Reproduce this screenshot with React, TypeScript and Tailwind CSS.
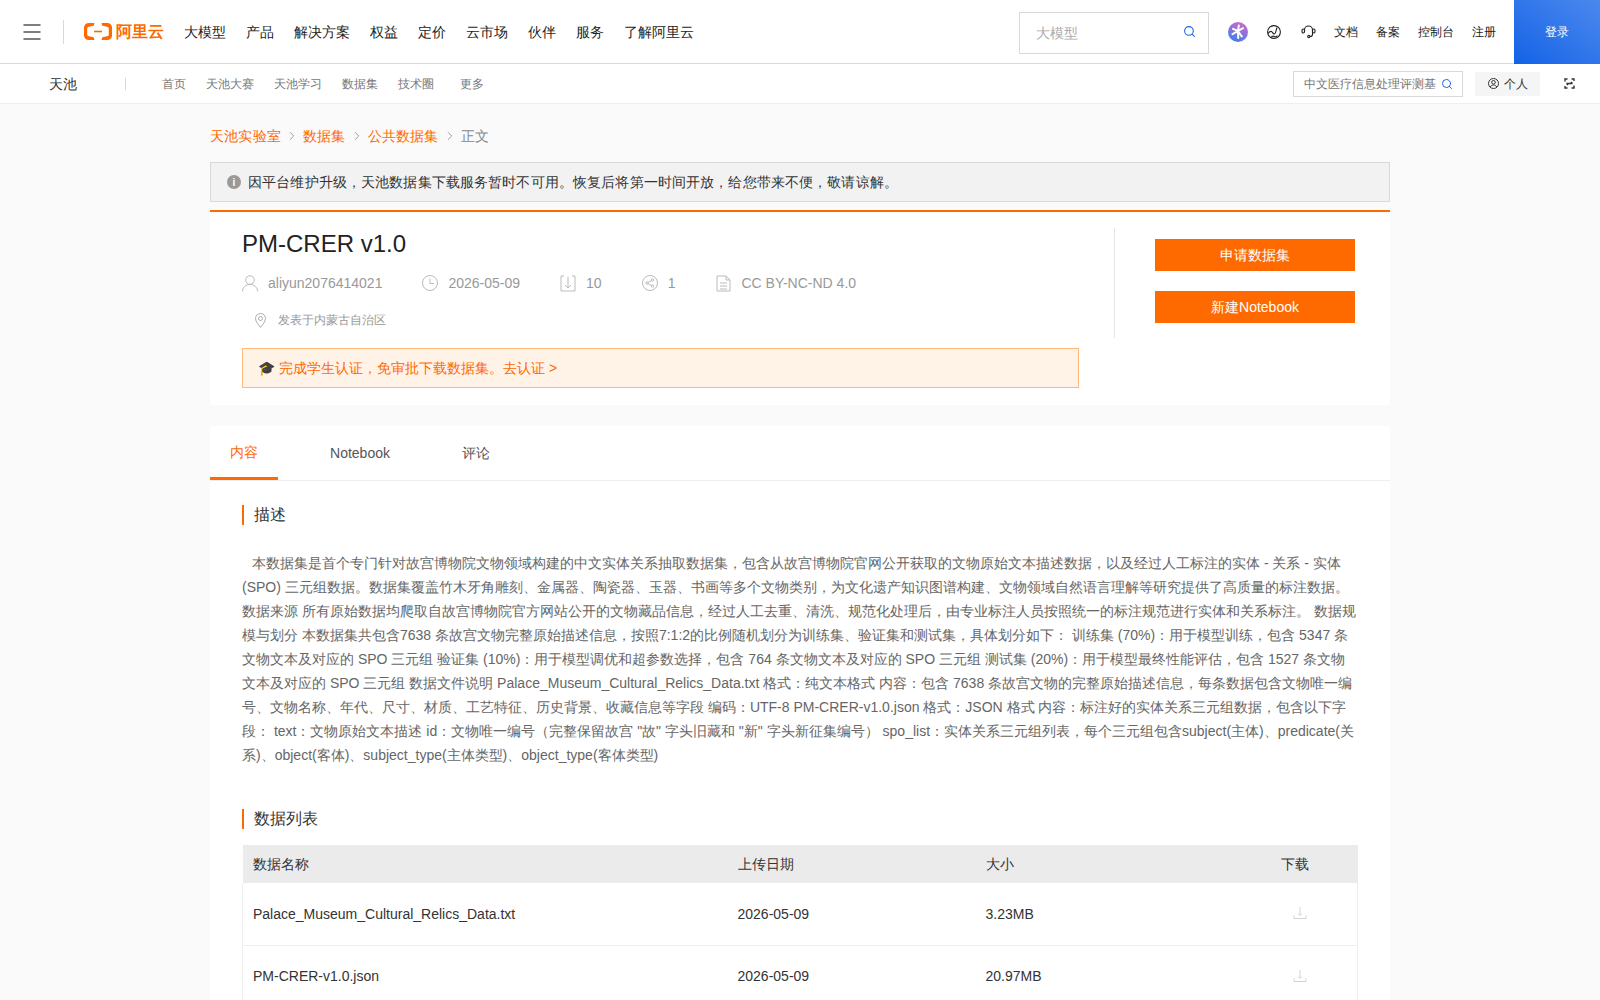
import React from 'react';
import { Search, ChevronRight, Menu } from 'lucide-react';

const mainNav = ['大模型', '产品', '解决方案', '权益', '定价', '云市场', '伙伴', '服务', '了解阿里云'];
const subNav = [
  { label: '首页', cls: 'ml-[36px]' },
  { label: '天池大赛', cls: 'ml-[20px]' },
  { label: '天池学习', cls: 'ml-[20px]' },
  { label: '数据集', cls: 'ml-[20px]' },
  { label: '技术圈', cls: 'ml-[20px]' },
  { label: '更多', cls: 'ml-[26px]' },
];

const description =
  '本数据集是首个专门针对故宫博物院文物领域构建的中文实体关系抽取数据集，包含从故宫博物院官网公开获取的文物原始文本描述数据，以及经过人工标注的实体 - 关系 - 实体 (SPO) 三元组数据。数据集覆盖竹木牙角雕刻、金属器、陶瓷器、玉器、书画等多个文物类别，为文化遗产知识图谱构建、文物领域自然语言理解等研究提供了高质量的标注数据。 数据来源 所有原始数据均爬取自故宫博物院官方网站公开的文物藏品信息，经过人工去重、清洗、规范化处理后，由专业标注人员按照统一的标注规范进行实体和关系标注。 数据规模与划分 本数据集共包含7638 条故宫文物完整原始描述信息，按照7:1:2的比例随机划分为训练集、验证集和测试集，具体划分如下： 训练集 (70%)：用于模型训练，包含 5347 条文物文本及对应的 SPO 三元组 验证集 (10%)：用于模型调优和超参数选择，包含 764 条文物文本及对应的 SPO 三元组 测试集 (20%)：用于模型最终性能评估，包含 1527 条文物文本及对应的 SPO 三元组 数据文件说明 Palace_Museum_Cultural_Relics_Data.txt 格式：纯文本格式 内容：包含 7638 条故宫文物的完整原始描述信息，每条数据包含文物唯一编号、文物名称、年代、尺寸、材质、工艺特征、历史背景、收藏信息等字段 编码：UTF-8 PM-CRER-v1.0.json 格式：JSON 格式 内容：标注好的实体关系三元组数据，包含以下字段： text：文物原始文本描述 id：文物唯一编号（完整保留故宫 "故" 字头旧藏和 "新" 字头新征集编号） spo_list：实体关系三元组列表，每个三元组包含subject(主体)、predicate(关系)、object(客体)、subject_type(主体类型)、object_type(客体类型)';

const files = [
  { name: 'Palace_Museum_Cultural_Relics_Data.txt', date: '2026-05-09', size: '3.23MB' },
  { name: 'PM-CRER-v1.0.json', date: '2026-05-09', size: '20.97MB' },
];

const DownloadIcon = () => (
  <svg width="14" height="14" viewBox="0 0 14 14" fill="none" stroke="#d4d4d4" strokeWidth="1">
    <path d="M7 1v8M5 7.5 7 9.5l2-2M1 9.500v3h12v-3" />
  </svg>
);

const Logo = () => (
  <div className="flex items-center gap-[4px] text-[#ff6a00]">
    <svg width="28" height="17" viewBox="0 0 28 17" fill="#ff6a00">
      <path d="M5 0h5.500l-.8 2.800-4.700 1C4 4 3.200 4.600 3.200 5.600v5.800c0 1 .8 1.600 1.800 1.800l4.700 1 .8 2.800H5c-3 0-5-2-5-4.500v-8C0 2 2 0 5 0Z" />
      <path d="M17.500 0H23c3 0 5 2 5 4.500v8c0 2.500-2 4.500-5 4.500h-5.500l.8-2.800 4.700-1c1-.2 1.800-.8 1.800-1.800V5.600c0-1-.8-1.600-1.800-1.800l-4.700-1L17.500 0Z" />
      <rect x="10" y="7.700" width="8" height="1.600" />
    </svg>
    <span className="text-[16px] font-bold leading-none">阿里云</span>
  </div>
);

const Chevron = () => <ChevronRight size={14} strokeWidth={1.2} className="mx-[4px] text-[#777]" />;

const SectionTitle = ({ children }: { children: React.ReactNode }) => (
  <div className="flex h-[20px] items-center border-l-2 border-[#ff6a00] pl-[10px] text-[16px] text-[#333]">{children}</div>
);

export default function App() {
  return (
    <div className="h-[1000px] overflow-hidden bg-[#fafafa] font-['Liberation_Sans',sans-serif] text-[14px] text-[#333]">
      {/* top bar */}
      <header className="flex h-[64px] items-center border-b border-[#d9d9d9] bg-white">
        <Menu size={24} strokeWidth={1.5} className="ml-[20px] text-[#555]" />
        <div className="ml-[19px] mr-[20px] h-[24px] w-px bg-[#d9d9d9]" />
        <Logo />
        <nav className="ml-[20px] mt-[2px] flex gap-[20px] text-[#222]">
          {mainNav.map((n) => (
            <span key={n}>{n}</span>
          ))}
        </nav>
        <div className="ml-auto mt-[2px] flex h-[42px] w-[190px] items-center justify-between border border-[#d9d9d9] pl-[16px] pr-[12px] text-[#aaa]">
          <span className="pt-[1px]">大模型</span>
          <Search size={13} className="mb-[2px] text-[#1a66e6]" />
        </div>
        <svg className="ml-[19px]" width="20" height="20" viewBox="0 0 20 20">
          <defs>
            <linearGradient id="star" x1="0.7" y1="0" x2="0.3" y2="1">
              <stop offset="0" stopColor="#d06ac8" />
              <stop offset="1" stopColor="#3a80f0" />
            </linearGradient>
          </defs>
          <circle cx="10" cy="10" r="10" fill="url(#star)" />
          <path d="M10.800 3.500 10 9 5 6.800M10 9l5-2.800M10 9l-5.500 3.200M10 9l.2 7M10 9l3.800 5.500" stroke="#fff" strokeWidth="2" strokeLinecap="round" fill="none" />
        </svg>
        <svg className="ml-[19px]" width="14" height="14" viewBox="0 0 14 14" fill="none" stroke="#222" strokeWidth="1.100">
          <circle cx="7" cy="7" r="6.400" />
          <path d="M1 8.500c1.500-1.800 2.500-2.500 3.500-2s1.500 3 3 2.500 1.500-4 2.500-6.500M4 12.500c1-1.500 2.500-1.500 3.500-1s2 .2 3-.8" />
        </svg>
        <svg className="ml-[20px]" width="15" height="15" viewBox="0 0 15 15" fill="none" stroke="#222" strokeWidth="1.100">
          <path d="M3.500 8V6a4 4 0 0 1 8 0v4.500c0 1.300-1 2-2.500 2" />
          <rect x="1" y="5" width="2.500" height="4" rx="1.200" />
          <rect x="11.500" y="5" width="2.500" height="4" rx="1.200" />
          <circle cx="7.800" cy="12.500" r="1.100" />
        </svg>
        <div className="ml-[18px] flex gap-[18px] text-[12px] text-[#222]">
          <span>文档</span>
          <span>备案</span>
          <span>控制台</span>
          <span>注册</span>
        </div>
        <div className="ml-[18px] flex h-[64px] w-[86px] items-center justify-center bg-gradient-to-tr from-[#0f62e6] to-[#4a88ee] text-[12px] text-white">登录</div>
      </header>

      {/* tianchi bar */}
      <div className="flex h-[40px] items-center border-b border-[#eee] bg-white">
        <span className="ml-[49px] pt-[2px] text-[14px] text-[#333]">天池</span>
        <div className="ml-[48px] h-[12px] w-px bg-[#d9d9d9]" />
        <nav className="flex text-[12px] text-[#777]">
          {subNav.map((n) => (
            <span key={n.label} className={n.cls}>{n.label}</span>
          ))}
        </nav>
        <div className="ml-auto flex h-[26px] w-[170px] items-center border border-[#d9d9d9] pl-[10px] text-[12px] text-[#777]">
          <span>中文医疗信息处理评测基</span>
          <Search size={12} className="ml-[5px] text-[#1a66e6]" />
        </div>
        <div className="ml-[12px] flex h-[24px] w-[65px] items-center justify-center gap-[5px] bg-[#f5f5f5] text-[12px] text-[#333]">
          <svg width="11" height="11" viewBox="0 0 11 11" fill="none" stroke="#333">
            <circle cx="5.500" cy="5.500" r="5" />
            <circle cx="5.500" cy="4.300" r="1.800" />
            <path d="M2.200 9c.8-1.500 2-2 3.300-2s2.500.5 3.300 2" />
          </svg>
          <span>个人</span>
        </div>
        <svg className="ml-[24px] mr-[25px]" width="11" height="11" viewBox="0 0 11 11" fill="none" stroke="#333" strokeWidth="1.400">
          <path d="M1 3.500V1h2.500M10 3V1H7.500M1 8v2h2.500M10 7.500V10H7.500M2.500 5.500h6M7 4l1.500 1.500M4 7 2.500 5.500" />
        </svg>
      </div>

      <main className="mx-auto w-[1180px]">
        {/* breadcrumb */}
        <div className="flex h-[58px] items-center pt-[6px] tracking-[0.2px] text-[#ff6a00]">
          <span>天池实验室</span>
          <Chevron />
          <span>数据集</span>
          <Chevron />
          <span>公共数据集</span>
          <Chevron />
          <span className="text-[#888]">正文</span>
        </div>

        {/* maintenance notice */}
        <div className="flex h-[40px] items-center border border-[#d9d9d9] bg-[#f2f2f2] pl-[16px] tracking-[0.13px] text-[#333]">
          <span className="mr-[7px] flex h-[14px] w-[14px] items-center justify-center rounded-full bg-[#999] text-[10px] font-bold text-white">i</span>
          因平台维护升级，天池数据集下载服务暂时不可用。恢复后将第一时间开放，给您带来不便，敬请谅解。
        </div>

        {/* dataset header */}
        <section className="mt-[8px] flex h-[195px] border-t-2 border-[#ff6a00] bg-white pl-[32px]">
          <div className="w-[837px]">
            <h1 className="mt-[18px] text-[24px] leading-[28px] text-[#222]">PM-CRER v1.0</h1>
            <div className="mt-[15px] flex h-[20px] items-center text-[#999]">
              <svg width="16" height="17" viewBox="0 0 16 17" fill="none" stroke="#bbb">
                <circle cx="8" cy="5" r="4.300" />
                <path d="M.5 16.500C.5 12 4 9.500 8 9.500s7.500 2.500 7.500 7" />
              </svg>
              <span className="ml-[10px]">aliyun2076414021</span>
              <svg className="ml-[40px]" width="16" height="16" viewBox="0 0 16 16" fill="none" stroke="#bbb">
                <circle cx="8" cy="8" r="7.500" />
                <path d="M8 3.500V8.500H12" />
              </svg>
              <span className="ml-[10px]">2026-05-09</span>
              <svg className="ml-[40px]" width="16" height="17" viewBox="0 0 16 17" fill="none" stroke="#bbb">
                <path d="M4 1H1v15h14V1h-3M8 2v11M5 10l3 3 3-3" />
              </svg>
              <span className="ml-[10px]">10</span>
              <svg className="ml-[40px]" width="16" height="16" viewBox="0 0 16 16" fill="none" stroke="#bbb">
                <circle cx="8" cy="8" r="7.500" />
                <circle cx="5" cy="8" r="1.200" />
                <circle cx="10.500" cy="5" r="1.200" />
                <circle cx="10.500" cy="11" r="1.200" />
                <path d="M6 7.500 9.500 5.500M6 8.500l3.500 2" />
              </svg>
              <span className="ml-[10px]">1</span>
              <svg className="ml-[41px]" width="15" height="17" viewBox="0 0 15 17" fill="none" stroke="#bbb">
                <path d="M1 1h9l4 4v11H1zM10 1v4h4M4 8h7M4 11h7M4 14h7" />
              </svg>
              <span className="ml-[10px]">CC BY-NC-ND 4.0</span>
            </div>
            <div className="mt-[17px] flex h-[20px] items-center pl-[13px] text-[12px] text-[#999]">
              <svg width="11" height="15" viewBox="0 0 11 15" fill="none" stroke="#aaa">
                <path d="M5.500.5C2.700.5.500 2.700.500 5.500c0 3.500 3.500 6.500 5 9 1.500-2.500 5-5.500 5-9 0-2.800-2.200-5-5-5Z" />
                <circle cx="5.500" cy="5.500" r="2" />
              </svg>
              <span className="ml-[12px]">发表于内蒙古自治区</span>
            </div>
            <div className="mt-[18px] flex h-[40px] items-center border border-[#ffb877] bg-[#fff3e8] pl-[15px] text-[#ff6a00]">
              <span className="mr-[4px] text-[#333]">🎓</span>
              完成学生认证，免审批下载数据集。去认证 &gt;
            </div>
          </div>
          <div className="ml-[35px] mt-[16px] flex h-[110px] w-[250px] flex-col gap-[20px] border-l border-[#e5e5e5] pl-[40px] pt-[11px]">
            <button className="h-[32px] w-[200px] bg-[#ff6a00] text-white">申请数据集</button>
            <button className="h-[32px] w-[200px] bg-[#ff6a00] text-white">新建Notebook</button>
          </div>
        </section>

        {/* content */}
        <section className="mt-[21px] bg-white pb-[40px]">
          <div className="flex h-[55px] gap-[32px] border-b border-[#eee]">
            <div className="flex w-[68px] items-center justify-center border-b-[3px] border-[#ff6a00] pt-[2px] text-[#ff6a00]">内容</div>
            <div className="flex w-[100px] items-center justify-center text-[#555]">Notebook</div>
            <div className="flex w-[68px] items-center justify-center text-[#555]">评论</div>
          </div>
          <div className="px-[32px]">
            <div className="pt-[24px]">
              <SectionTitle>描述</SectionTitle>
            </div>
            <p className="mt-[26px] text-[14px] leading-[24px] text-[#666]">
              <span className="inline-block w-[10px]" />
              {description}
            </p>
            <div className="mt-[42px]">
              <SectionTitle>数据列表</SectionTitle>
            </div>
            <table className="mt-[16px] w-full table-fixed border-collapse">
              <thead>
                <tr className="h-[38px] bg-[#ebebeb] text-left text-[#333]">
                  <th className="w-[485px] pl-[10px] font-normal">数据名称</th>
                  <th className="w-[248px] pl-[10px] font-normal">上传日期</th>
                  <th className="w-[295px] pl-[10px] font-normal">大小</th>
                  <th className="pl-[10px] font-normal">下载</th>
                </tr>
              </thead>
              <tbody>
                {files.map((f) => (
                  <tr key={f.name} className="h-[62px] border border-t-0 border-[#eee] text-[#333]">
                    <td className="pl-[10px] pt-[1px]">{f.name}</td>
                    <td className="pl-[10px] pt-[1px]">{f.date}</td>
                    <td className="pl-[10px] pt-[1px]">{f.size}</td>
                    <td className="pb-[1px] pl-[22px]">
                      <DownloadIcon />
                    </td>
                  </tr>
                ))}
              </tbody>
            </table>
          </div>
        </section>
      </main>
    </div>
  );
}
